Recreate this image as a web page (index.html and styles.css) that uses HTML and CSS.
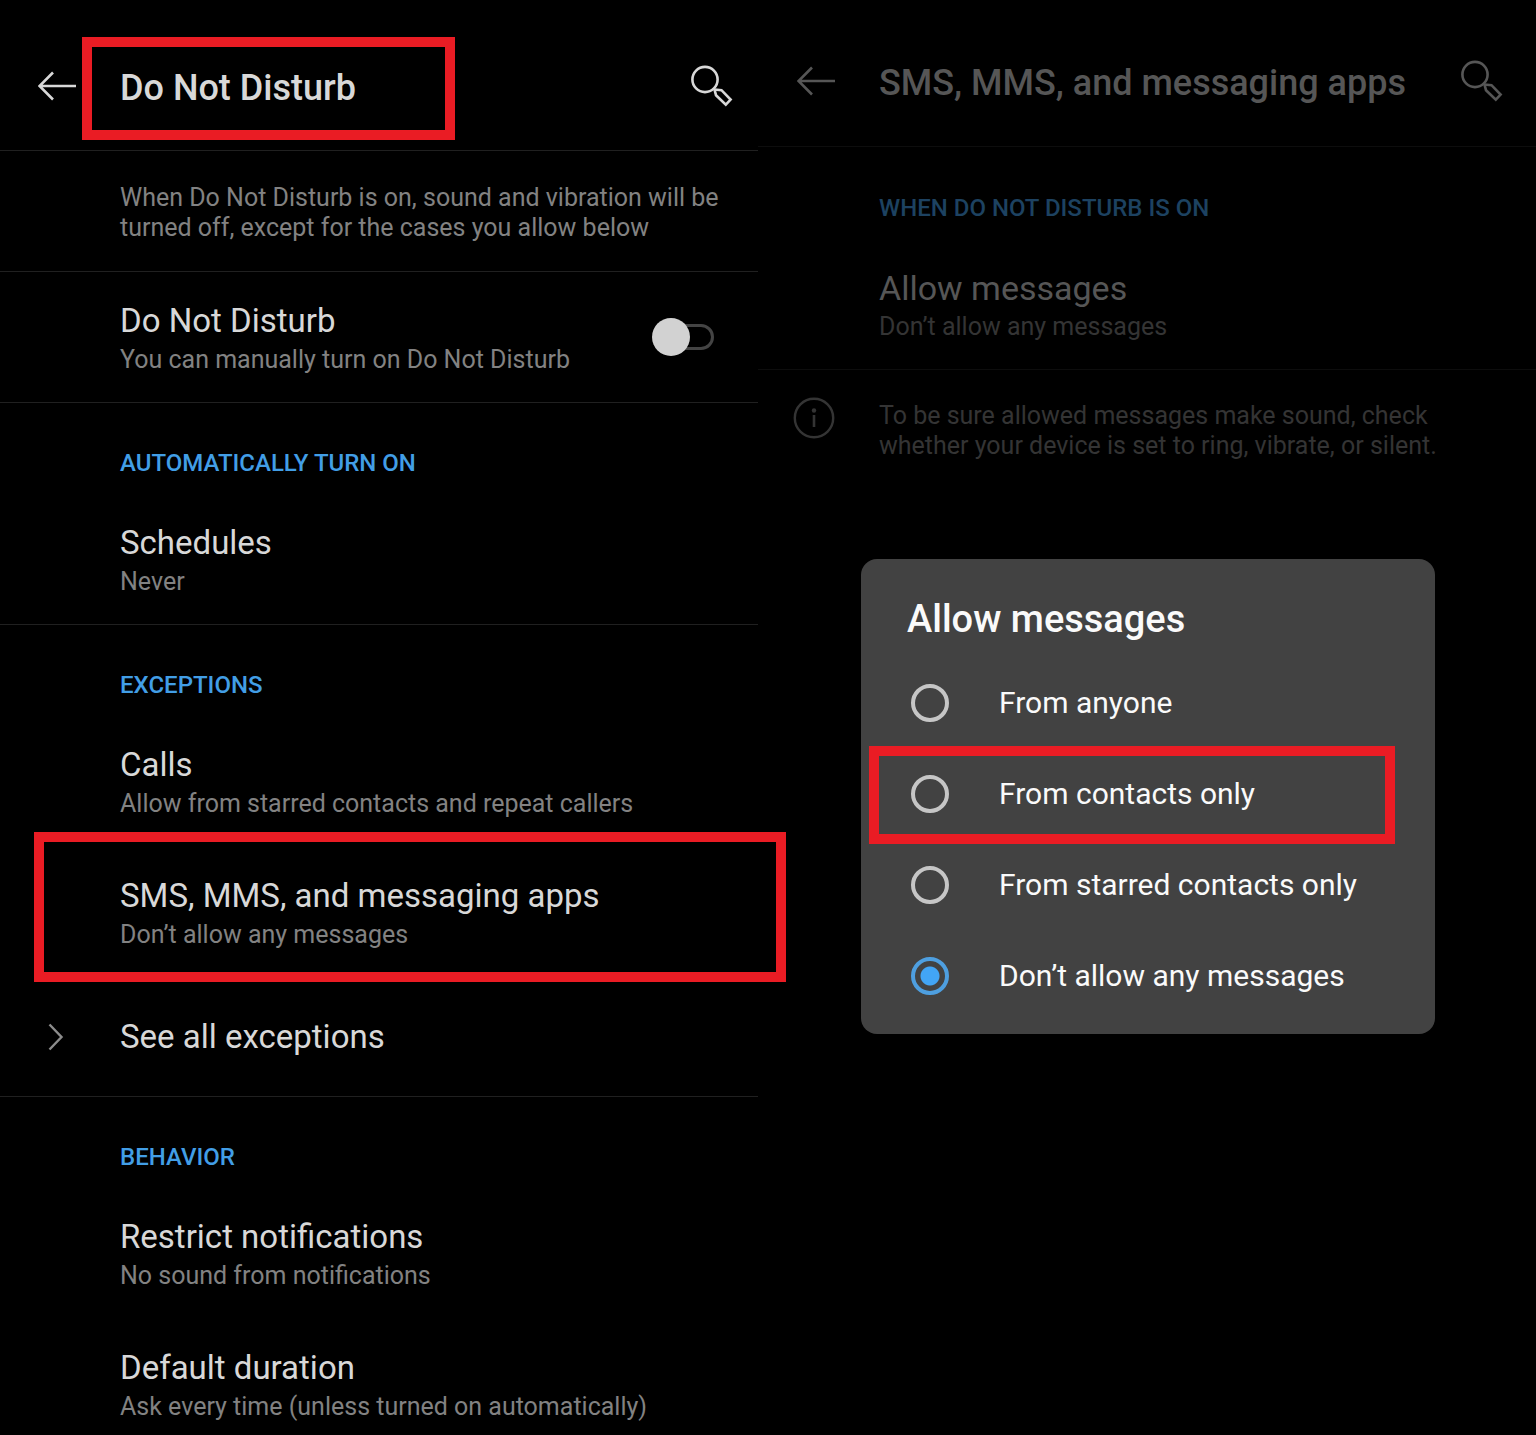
FILE: index.html
```html
<!DOCTYPE html>
<html lang="en">
<head>
<meta charset="utf-8">
<meta name="viewport" content="width=device-width, initial-scale=1">
<title>Do Not Disturb</title>
<link rel="stylesheet" href="styles.css">
</head>
<body>
<svg class="defs" aria-hidden="true">
  <symbol id="arrow" viewBox="0 0 38 30">
    <path d="M15 1.500 1.500 15 15 28.500M2 15H38" fill="none" stroke="currentColor" stroke-width="2.600"/>
  </symbol>
  <symbol id="search" viewBox="0 0 42 42">
    <g fill="none" stroke="currentColor" stroke-width="2.600">
      <circle cx="14" cy="14.500" r="12.600"/>
      <path d="M23.500 24.500 30.500 25.200 39.600 34.600 34.800 39.600 25 30.200Z"/>
    </g>
  </symbol>
</svg>
<div class="screens">
  <main class="screen">
    <header class="bar">
      <button class="icon-button" aria-label="Back"><svg class="arrow"><use href="#arrow"/></svg></button>
      <h1 class="bar-title">Do Not Disturb</h1>
      <button class="icon-button" aria-label="Search"><svg class="search"><use href="#search"/></svg></button>
      <span class="mark mark-title"></span>
    </header>
    <p class="intro line">When Do Not Disturb is on, sound and vibration will be turned off, except for the cases you allow below</p>
    <div class="row switch-row line">
      <label class="row-text" for="dnd">
        <span class="name">Do Not Disturb</span>
        <span class="note">You can manually turn on Do Not Disturb</span>
      </label>
      <input class="switch" type="checkbox" id="dnd">
    </div>
    <section class="line">
      <h2 class="label">AUTOMATICALLY TURN ON</h2>
      <a class="row" href="#schedules"><span class="name">Schedules</span><span class="note">Never</span></a>
    </section>
    <section class="line">
      <h2 class="label">EXCEPTIONS</h2>
      <a class="row" href="#calls"><span class="name">Calls</span><span class="note">Allow from starred contacts and repeat callers</span></a>
      <a class="row" href="#messages"><span class="name">SMS, MMS, and messaging apps</span><span class="note">Don’t allow any messages</span><span class="mark mark-row"></span></a>
      <a class="row more" href="#exceptions">
        <svg class="chevron" viewBox="0 0 16 28"><path d="M1.500 1.500 13.500 14 1.500 26.500" fill="none" stroke="currentColor" stroke-width="2.400"/></svg>
        <span class="name">See all exceptions</span>
      </a>
    </section>
    <section>
      <h2 class="label">BEHAVIOR</h2>
      <a class="row" href="#restrict"><span class="name">Restrict notifications</span><span class="note">No sound from notifications</span></a>
      <a class="row last" href="#duration"><span class="name">Default duration</span><span class="note">Ask every time (unless turned on automatically)</span></a>
    </section>
  </main>

  <div class="screen dimmed">
    <header class="bar">
      <button class="icon-button" aria-label="Back"><svg class="arrow"><use href="#arrow"/></svg></button>
      <h1 class="bar-title">SMS, MMS, and messaging apps</h1>
      <button class="icon-button" aria-label="Search"><svg class="search"><use href="#search"/></svg></button>
    </header>
    <section class="line">
      <h2 class="label">WHEN DO NOT DISTURB IS ON</h2>
      <a class="row" href="#allow"><span class="name">Allow messages</span><span class="note">Don’t allow any messages</span></a>
    </section>
    <div class="info">
      <svg class="info-icon" viewBox="0 0 42 42">
        <circle cx="21" cy="21" r="19.200" fill="none" stroke="currentColor" stroke-width="2.400"/>
        <circle cx="21" cy="13.500" r="2.200" fill="currentColor"/>
        <path d="M21 18V30" stroke="currentColor" stroke-width="2.600"/>
      </svg>
      <p class="info-text">To be sure allowed messages make sound, check whether your device is set to ring, vibrate, or silent.</p>
    </div>
    <div class="overlay">
      <form class="dialog" role="dialog" aria-labelledby="dialog-title">
        <h2 class="dialog-title" id="dialog-title">Allow messages</h2>
        <label class="option"><input class="radio" type="radio" name="from">From anyone</label>
        <label class="option"><input class="radio" type="radio" name="from">From contacts only<span class="mark mark-option"></span></label>
        <label class="option"><input class="radio" type="radio" name="from">From starred contacts only</label>
        <label class="option"><input class="radio" type="radio" name="from" checked>Don’t allow any messages</label>
      </form>
    </div>
  </div>
</div>
</body>
</html>
```
FILE: styles.css
```css
* { box-sizing: border-box; }
body {
  margin: 0;
  background: #000;
  font-family: Roboto, "Liberation Sans", sans-serif;
}
h1, h2, p { margin: 0; font-weight: 500; }
a { color: inherit; text-decoration: none; }
.defs { position: absolute; width: 0; height: 0; }

.screens {
  display: grid;
  grid-template-columns: 758fr 778fr;
  min-height: 100vh;
}
.screen {
  --strong: #d8d8d8;
  --soft: #828282;
  --accent: #429ee6;
  --rule: #202020;
  position: relative;
  min-width: 0;
  color: var(--strong);
}
.dimmed {
  --strong: #565656;
  --soft: #343434;
  --accent: #1d4261;
  --rule: #0d0d0d;
}
.line { border-bottom: 1px solid var(--rule); }

.bar {
  position: relative;
  display: flex;
  align-items: center;
  height: 151px;
  padding: 22px 25px 0 38px;
  border-bottom: 1px solid var(--rule);
}
.dimmed .bar { height: 147px; padding: 16px 33px 0 39px; }
.bar-title {
  flex: 1;
  margin-left: 44px;
  padding-top: 4px;
  font-size: 36px;
  line-height: 44px;
}
.icon-button {
  display: flex;
  padding: 0;
  border: 0;
  background: none;
  color: inherit;
}
.arrow { width: 38px; height: 30px; }
.search { width: 42px; height: 42px; }

.intro {
  padding: 32px 32px 28px 120px;
  color: var(--soft);
  font-size: 25px;
  font-weight: 400;
  line-height: 30px;
}
.label {
  padding: 45px 32px 16px 120px;
  color: var(--accent);
  font-size: 24px;
  line-height: 30px;
}
.row {
  position: relative;
  display: block;
  padding: 26px 32px 26px 120px;
}
.row + .row { margin-top: 1px; }
.name, .note { display: block; }
.name { font-size: 33px; line-height: 46px; }
.note { color: var(--soft); font-size: 25px; line-height: 32px; }
.last { padding-bottom: 10px; }
.switch-row {
  display: flex;
  align-items: center;
  justify-content: space-between;
  padding-right: 44px;
}
.switch {
  appearance: none;
  position: relative;
  width: 62px;
  height: 38px;
  margin: 0;
}
.switch::before, .switch::after {
  content: "";
  position: absolute;
}
.switch::before {
  inset: 6px 0 6px 12px;
  border: 3px solid #444;
  border-radius: 13px;
}
.switch::after {
  inset: 0 24px 0 0;
  border-radius: 50%;
  background: #d2d2d2;
}
.more {
  display: flex;
  align-items: center;
  gap: 56px;
  padding: 36px 32px 36px 48px;
}
.chevron { width: 16px; height: 28px; color: #8c8c8c; }

.dimmed .row, .dimmed .label { padding-left: 121px; }
.dimmed .label { padding-top: 46px; }
.dimmed .name { font-size: 34px; }
.info {
  display: flex;
  gap: 44px;
  padding: 27px 80px 0 35px;
  color: var(--soft);
}
.info-icon { flex: none; width: 42px; height: 42px; }
.info-text {
  padding-top: 4px;
  font-size: 25px;
  font-weight: 400;
  line-height: 30px;
}

.overlay {
  position: absolute;
  inset: 0;
  display: flex;
  align-items: flex-start;
  justify-content: center;
  padding: 559px 0 0 2px;
}
.dialog {
  width: 574px;
  padding: 38px 0 13px;
  border-radius: 16px;
  background: #424242;
  color: #fafafa;
}
.dialog-title {
  padding: 0 46px 16px;
  font-size: 38px;
  line-height: 44px;
}
.option {
  position: relative;
  display: flex;
  align-items: center;
  gap: 50px;
  height: 91px;
  padding-left: 50px;
  font-size: 30px;
  line-height: 40px;
}
.radio {
  appearance: none;
  width: 38px;
  height: 38px;
  margin: 0;
  border: 4px solid #c6c6c6;
  border-radius: 50%;
}
.radio:checked {
  border-color: #4e9fe0;
  background: radial-gradient(circle, #42a5f5 9px, transparent 10px);
}

.mark {
  position: absolute;
  z-index: 1;
  border: 10px solid #ea1c24;
  pointer-events: none;
}
.mark-title { top: 37px; left: 82px; width: 373px; height: 103px; }
.mark-row { inset: -15px -28px -5px 34px; }
.mark-option { inset: -2px 40px -5px 8px; }
```
